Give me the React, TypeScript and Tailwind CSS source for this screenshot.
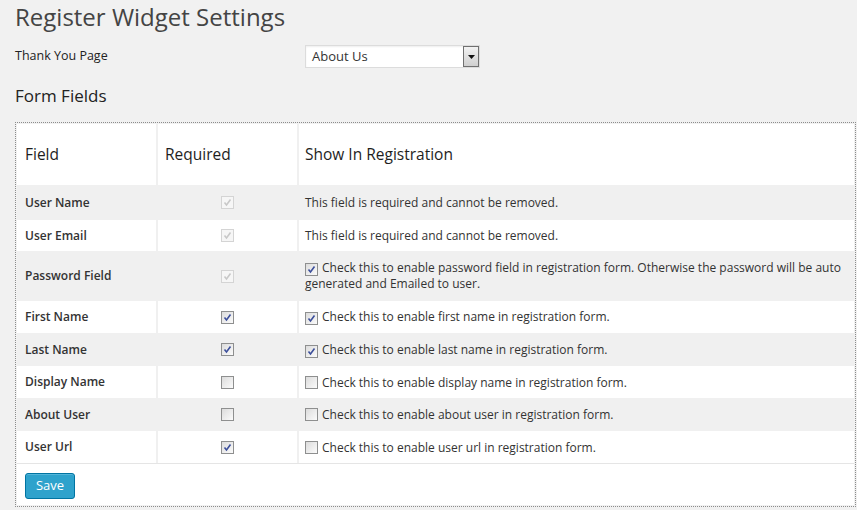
import React from "react";

type Row = {
  label: string;
  h: string;
  required: "locked" | boolean;
  show: "locked" | boolean;
  text: string;
};

const rows: Row[] = [
  { label: "User Name", h: "h-[35px]", required: "locked", show: "locked", text: "This field is required and cannot be removed." },
  { label: "User Email", h: "h-[31px]", required: "locked", show: "locked", text: "This field is required and cannot be removed." },
  {
    label: "Password Field",
    h: "h-[50px]",
    required: "locked",
    show: true,
    text: "Check this to enable password field in registration form. Otherwise the password will be auto generated and Emailed to user.",
  },
  { label: "First Name", h: "h-[32px]", required: true, show: true, text: "Check this to enable first name in registration form." },
  { label: "Last Name", h: "h-[33px]", required: true, show: true, text: "Check this to enable last name in registration form." },
  { label: "Display Name", h: "h-[32px]", required: false, show: false, text: "Check this to enable display name in registration form." },
  { label: "About User", h: "h-[33px]", required: false, show: false, text: "Check this to enable about user in registration form." },
  { label: "User Url", h: "h-[32px]", required: true, show: false, text: "Check this to enable user url in registration form." },
];

function Box({ checked, disabled }: { checked: boolean; disabled?: boolean }) {
  return (
    <span
      className={
        disabled
          ? "inline-flex h-[13px] w-[13px] shrink-0 items-center justify-center border border-[#d4d4d4] bg-[#f6f6f6]"
          : "inline-flex h-[13px] w-[13px] shrink-0 items-center justify-center border border-[#8e8f8f] bg-gradient-to-br from-[#dcdcdc] to-[#fbfbfb]"
      }
    >
      {checked && (
        <svg width="9" height="9" viewBox="0 0 9 9">
          <path
            d="M1.5 4.5 L3.5 7 L7.5 1.5"
            fill="none"
            stroke={disabled ? "#c8c8c8" : "#3c4f9b"}
            strokeWidth="1.6"
          />
        </svg>
      )}
    </span>
  );
}

export default function App() {
  return (
    <div className="min-h-[510px] bg-[#f1f1f1] px-[15px] text-[#222] [font-family:'Open_Sans',sans-serif]">
      <h1 className="pt-[1px] text-[24px] leading-[31px] text-[#444]">Register Widget Settings</h1>

      <div className="mt-[13px] flex h-[23px] items-center">
        <span className="w-[290px] text-[12.5px] text-[#222]">Thank You Page</span>
        <div className="flex h-[23px] w-[175px] items-center border border-[#dcdcdc] bg-white shadow-[inset_0_1px_2px_rgba(0,0,0,0.07)]">
          <span className="flex-1 pl-[6px] text-[13px] text-[#333]">About Us</span>
          <span className="flex h-[21px] w-[16px] items-center justify-center border border-[#707070] bg-gradient-to-b from-[#f2f2f2] to-[#cfcfcf]">
            <svg width="7" height="4" viewBox="0 0 7 4">
              <path d="M0 0 H7 L3.5 4 Z" fill="#111" />
            </svg>
          </span>
        </div>
      </div>

      <h2 className="mt-[16px] text-[17px] leading-[24px] text-[#222]">Form Fields</h2>

      <div className="mt-[14px] w-[841px] border border-dotted border-[#8c8c8c] p-px">
        <div className="flex h-[61px] items-center bg-white text-[15.5px] text-[#1e1e1e]">
          <div className="flex h-full w-[141px] items-center border-r-2 border-[#f0f0f0] pl-[8px]">Field</div>
          <div className="flex h-full w-[141px] items-center border-r-2 border-[#f0f0f0] pl-[7px]">Required</div>
          <div className="flex h-full flex-1 items-center pl-[6px]">Show In Registration</div>
        </div>

        {rows.map((r, i) => (
          <div
            key={r.label}
            className={`flex ${r.h} items-stretch text-[12px] ${i % 2 === 0 ? "bg-[#f0f0f0]" : "bg-white"}`}
          >
            <div className="flex w-[141px] items-center border-r-2 border-[#f0f0f0] pl-[8px] font-semibold text-[#333]">
              {r.label}
            </div>
            <div className="flex w-[141px] items-center justify-center border-r-2 border-[#f0f0f0]">
              <Box checked={r.required !== false} disabled={r.required === "locked"} />
            </div>
            <div className="flex flex-1 items-center pl-[6px] pr-[4px] text-[#333]">
              {r.show === "locked" ? (
                <span>{r.text}</span>
              ) : (
                <span className="leading-[16px]">
                  <span className="mr-[4px] inline-flex translate-y-[2px] align-baseline">
                    <Box checked={r.show} />
                  </span>
                  {r.text}
                </span>
              )}
            </div>
          </div>
        ))}

        <div className="h-[42px] border-t border-[#e5e5e5] bg-white pl-[8px] pt-[8px]">
          <button className="h-[26px] w-[50px] rounded-[3px] border border-[#0074a2] bg-[#2ea2cc] text-[13px] text-white shadow-[inset_0_1px_0_rgba(120,200,230,0.5)]">
            Save
          </button>
        </div>
      </div>
    </div>
  );
}
